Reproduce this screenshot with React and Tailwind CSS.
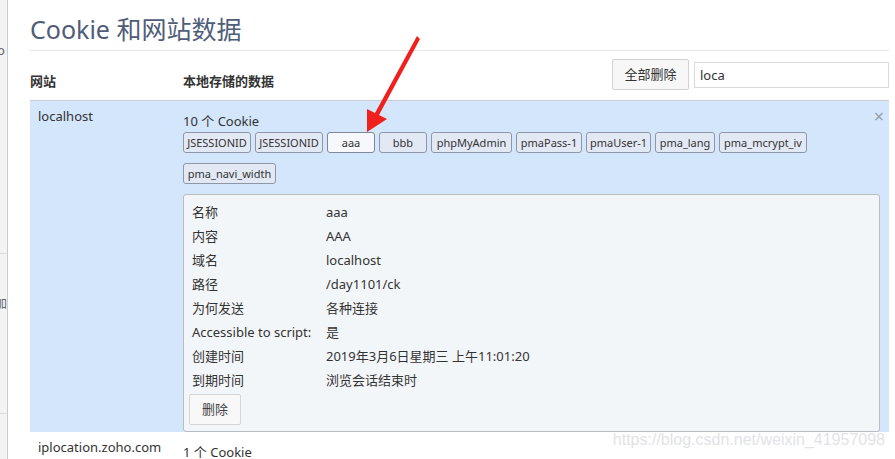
import React from "react";

const F = { fontFamily: '"Noto Sans", "Noto Sans CJK SC", sans-serif' };

const chips = ["JSESSIONID", "JSESSIONID", "aaa", "bbb", "phpMyAdmin", "pmaPass-1", "pmaUser-1", "pma_lang", "pma_mcrypt_iv", "pma_navi_width"];
const chipW = [68, 68, 48, 48, 81, 66, 65, 60, 88, 93];

const rows = [
  ["名称", "aaa"],
  ["内容", "AAA"],
  ["域名", "localhost"],
  ["路径", "/day1101/ck"],
  ["为何发送", "各种连接"],
  ["Accessible to script:", "是"],
  ["创建时间", "2019年3月6日星期三 上午11:01:20"],
  ["到期时间", "浏览会话结束时"],
];

export default function App() {
  return (
    <div className="relative flex w-[895px] h-[459px] overflow-hidden bg-white text-[#333]" style={F}>
      {/* left strip */}
      <div className="w-[8px] shrink-0 bg-[#f2f3f5] border-r border-[#c9ccd1] flex flex-col overflow-hidden">
        <div className="h-[42px] shrink-0" />
        <div className="h-[16px] shrink-0 text-[13px] leading-[16px] text-[#666] -ml-[3px]">o</div>
        <div className="h-[196px] shrink-0 border-b border-[#dcdde0]" />
        <div className="h-[42px] shrink-0" />
        <div className="h-[16px] shrink-0 text-[12px] leading-[16px] text-[#666] -ml-[5px]">加</div>
        <div className="h-[102px] shrink-0 border-b border-[#dcdde0]" />
      </div>

      {/* main */}
      <div className="flex-1 flex flex-col pl-[22px] pr-[6px]">
        <div className="h-[51px] shrink-0 border-b border-[#e6e7ea] flex items-end pb-[4px]">
          <h1 className="text-[25px] leading-[34px] text-[#4f5d78]">Cookie 和网站数据</h1>
        </div>

        <div className="h-[49px] shrink-0 flex items-start">
          <div className="w-[153px] pt-[21px] text-[13px] leading-[18px] font-bold">网站</div>
          <div className="flex-1 pt-[21px] text-[13px] leading-[18px] font-bold">本地存储的数据</div>
          <button className="mt-[8px] h-[31px] w-[77px] border border-[#d2d2d2] rounded-[2px] bg-[#f7f7f7] text-[13px] text-[#333]">全部删除</button>
          <div className="mt-[11px] ml-[5px] h-[26px] w-[195px] border border-[#d9d9d9] bg-white text-[13px] leading-[24px] pl-[5px] text-[#333]">loca</div>
        </div>

        {/* selected row */}
        <div className="h-[332px] shrink-0 flex bg-[#d4e6fb] border-t border-[#c8cdd4] relative">
          <div className="w-[153px] pl-[8px] pt-[6px] text-[13px] leading-[18px]">localhost</div>
          <div className="flex-1 pt-[11px] pr-[9px]">
            <div className="text-[13px] leading-[18px]">10 个 Cookie</div>
            <div className="flex flex-wrap gap-x-[4px] gap-y-[10px] mt-[2px] w-[640px]">
              {chips.map((c, i) => (
                <div
                  key={i}
                  className={
                    "h-[21px] flex items-center justify-center rounded-[3px] border text-[11px] leading-[16px] " +
                    (c === "aaa" ? "bg-[#f6f8fb] border-[#7f8898]" : "bg-[#e3e9f4] border-[#8e97a7]")
                  }
                  style={{ width: chipW[i] }}
                >
                  {c}
                </div>
              ))}
            </div>
            <div className="mt-[10px] h-[238px] bg-[#f3f6f9] border border-[#b9bdc2] rounded-[3px] pt-[6px] pl-[8px]">
              {rows.map(([k, v], i) => (
                <div key={i} className="flex h-[24px] items-center text-[13px]">
                  <div className="w-[134px]">{k}</div>
                  <div>{v}</div>
                </div>
              ))}
              <button className="mt-[1px] -ml-[3px] h-[31px] w-[52px] border border-[#d5d5d5] rounded-[2px] bg-[#f8f8f8] text-[13px] text-[#444]">删除</button>
            </div>
          </div>
          <div className="absolute right-[5px] top-[6px] text-[18px] leading-[18px] text-[#97a0ab]">×</div>
        </div>

        {/* next row */}
        <div className="flex flex-1 relative">
          <div className="w-[153px] pl-[8px] pt-[6px] text-[13px] leading-[18px]">iplocation.zoho.com</div>
          <div className="flex-1 pt-[11px] text-[13px] leading-[18px]">1 个 Cookie</div>
          <div className="absolute right-[4px] -top-[4px] text-[16px] text-[#e2e3e6]" style={{ fontFamily: '"Liberation Sans", sans-serif' }}>https://blog.csdn.net/weixin_41957098</div>
        </div>
      </div>

      {/* red arrow */}
      <svg className="absolute left-0 top-0 pointer-events-none" width="895" height="459">
        <polygon points="417,36 420,39 379,115 387,119 367,132 367,109 375,113" fill="#f0201c" />
      </svg>
    </div>
  );
}
